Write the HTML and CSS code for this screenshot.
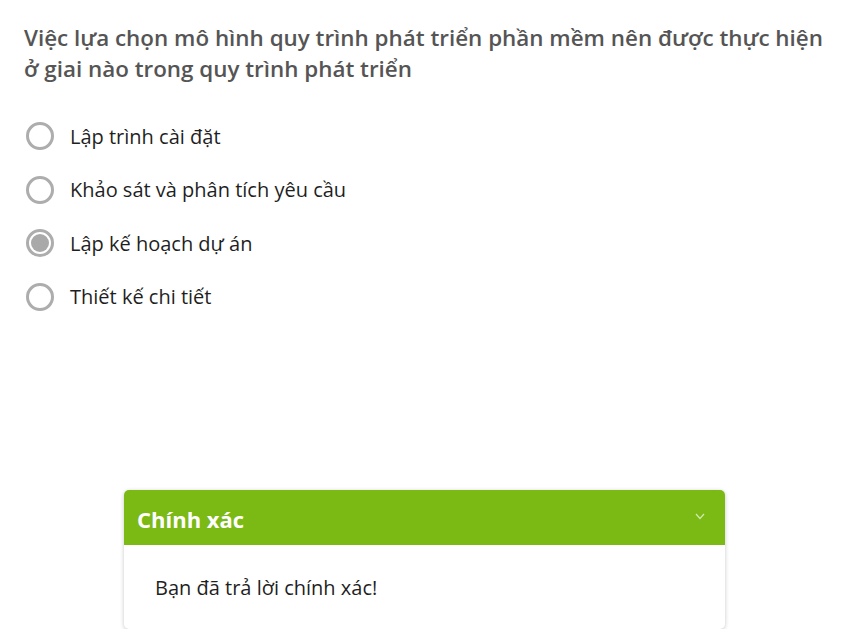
FILE: index.html
```html
<!DOCTYPE html>
<html lang="vi">
<head>
<meta charset="utf-8">
<link rel="stylesheet" href="styles.css">
</head>
<body>
<div class="page">
  <h1 class="question">Việc lựa chọn mô hình quy trình phát triển phần mềm nên được thực hiện ở giai nào trong quy trình phát triển</h1>
  <ul class="options">
    <li class="option"><span class="radio"></span><span class="label">Lập trình cài đặt</span></li>
    <li class="option"><span class="radio"></span><span class="label">Khảo sát và phân tích yêu cầu</span></li>
    <li class="option"><span class="radio checked"></span><span class="label">Lập kế hoạch dự án</span></li>
    <li class="option"><span class="radio"></span><span class="label">Thiết kế chi tiết</span></li>
  </ul>
  <div class="feedback">
    <div class="fb-head">
      <span class="fb-title">Chính xác</span>
      <svg class="chev" width="10" height="7" viewBox="0 0 10 7"><path d="M1 1 L5 5.5 L9 1" fill="none" stroke="#d2eaae" stroke-width="1.2"/></svg>
    </div>
    <div class="fb-body">Bạn đã trả lời chính xác!</div>
  </div>
</div>
</body>
</html>
```

FILE: styles.css
```css
html, body {
  margin: 0;
  padding: 0;
  background: #fff;
}
body {
  font-family: "Open Sans", "Noto Sans", sans-serif;
  color: #1f1f1f;
}
.page {
  padding: 22px 24px 0 24px;
}
.question {
  margin: 0;
  font-size: 22.4px;
  font-weight: 600;
  line-height: 31px;
  color: #555;
}
.options {
  list-style: none;
  margin: 38px 0 0 2px;
  padding: 0;
  display: flex;
  flex-direction: column;
  gap: 25.5px;
}
.option {
  display: flex;
  align-items: center;
  gap: 16px;
  height: 28px;
}
.radio {
  box-sizing: border-box;
  width: 28px;
  height: 28px;
  border: 3px solid #adadad;
  border-radius: 50%;
  display: flex;
  align-items: center;
  justify-content: center;
  flex: none;
}
.radio.checked::after {
  content: "";
  width: 18px;
  height: 18px;
  border-radius: 50%;
  background: #a9a9a9;
}
.label {
  font-size: 20px;
  color: #1f1f1f;
}
.feedback {
  margin: 179px 0 0 100px;
  width: 601px;
  border-radius: 5px;
  overflow: hidden;
  background: #fff;
  box-shadow: 0 1px 4px rgba(0,0,0,0.22);
}
.fb-head {
  background: #7bb914;
  height: 55px;
  display: flex;
  align-items: center;
  justify-content: space-between;
  padding: 0 20px 0 13px;
}
.fb-title {
  color: #fff;
  font-weight: 700;
  font-size: 22px;
  line-height: 1;
  margin-top: 4px;
}
.chev {
  display: block;
  margin-top: -2px;
}
.fb-body {
  padding: 30px 31px 28px;
  font-size: 20px;
  line-height: 26px;
  color: #1f1f1f;
}
```
